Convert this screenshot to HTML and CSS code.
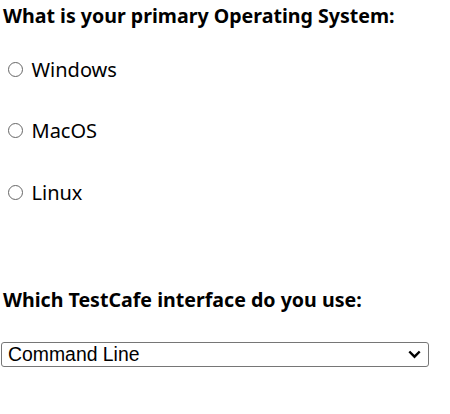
FILE: index.html
```html
<!DOCTYPE html>
<html>
<head>
<meta charset="utf-8">
<link rel="stylesheet" href="styles.css">
</head>
<body>
<form class="survey">
  <h3 class="question">What is your primary Operating System:</h3>
  <div class="options">
    <label class="option"><input type="radio" name="os" class="radio-input"><span class="radio"></span><span>Windows</span></label>
    <label class="option"><input type="radio" name="os" class="radio-input"><span class="radio"></span><span>MacOS</span></label>
    <label class="option"><input type="radio" name="os" class="radio-input"><span class="radio"></span><span>Linux</span></label>
  </div>
  <h3 class="question q2">Which TestCafe interface do you use:</h3>
  <div class="choice">
    <span class="choice-text">Command Line</span>
    <svg class="chevron" width="13" height="9" viewBox="0 0 13 9"><path d="M1.3 1.5 L6.5 6.7 L11.7 1.5" fill="none" stroke="#000" stroke-width="2.4"/></svg>
  </div>
</form>
</body>
</html>
```

FILE: styles.css
```css
html, body {
  margin: 0;
  padding: 0;
  background: #fff;
}
.survey {
  display: flex;
  flex-direction: column;
  align-items: flex-start;
  font-family: "Noto Sans", "Open Sans", sans-serif;
  color: #000;
}
.question {
  margin: 0;
  padding-left: 3px;
  font-size: 19.6px;
  font-weight: 700;
  line-height: 32px;
}
.options {
  display: flex;
  flex-direction: column;
  padding-top: 7px;
}
.option {
  display: flex;
  align-items: center;
  height: 61.5px;
  font-size: 20px;
  line-height: 28px;
}
.radio-input {
  display: none;
}
.radio {
  box-sizing: border-box;
  flex: 0 0 15px;
  margin: 0 9px 1px 7.5px;
  width: 15px;
  height: 15px;
  border: 1.6px solid #666;
  border-radius: 50%;
  background: #fff;
}
.q2 {
  margin-top: 60px;
}
.choice {
  box-sizing: border-box;
  display: flex;
  align-items: center;
  justify-content: space-between;
  margin: 26px 0 0 1px;
  padding: 0 7px 0 6px;
  width: 428px;
  height: 25px;
  font-family: "Liberation Sans", Arial, sans-serif;
  font-size: 19.4px;
  line-height: 23px;
  color: #000;
  border: 1px solid #767676;
  border-radius: 3px;
  background: #fff;
}
.chevron {
  display: block;
}
```
